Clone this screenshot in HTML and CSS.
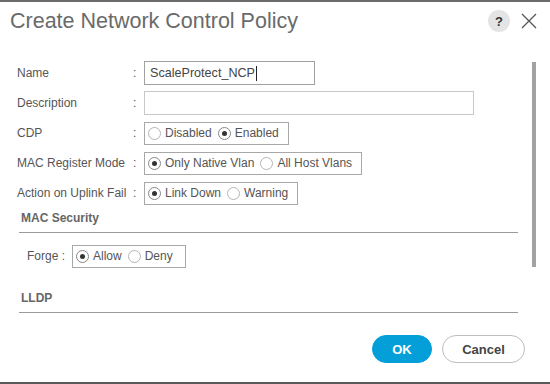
FILE: index.html
```html
<!DOCTYPE html>
<html lang="en">
<head>
    <meta charset="UTF-8">
    <title>Create Network Control Policy</title>
    <link rel="stylesheet" href="styles.css">
</head>
<body>
    <div class="dialog">
        <div class="dialog__header">
            <h1 class="dialog__title">Create Network Control Policy</h1>
            <span class="help">?</span>
            <svg class="close" width="16" height="16" viewBox="0 0 16 16">
                <path d="M1 1 L15 15 M15 1 L1 15" stroke="#555" stroke-width="1.3" fill="none"/>
            </svg>
        </div>

        <div class="dialog__body">
            <div class="row">
                <div class="label"><span class="label__text">Name</span><span class="colon">:</span></div>
                <div class="input input--focus">ScaleProtect_NCP<span class="caret"></span></div>
            </div>
            <div class="row">
                <div class="label"><span class="label__text">Description</span><span class="colon">:</span></div>
                <div class="input input--wide"></div>
            </div>
            <div class="row">
                <div class="label"><span class="label__text">CDP</span><span class="colon">:</span></div>
                <div class="radios">
                    <span class="radio"></span><span class="radio__text">Disabled</span>
                    <span class="radio radio--on"></span><span class="radio__text">Enabled</span>
                </div>
            </div>
            <div class="row">
                <div class="label"><span class="label__text">MAC Register Mode</span><span class="colon">:</span></div>
                <div class="radios">
                    <span class="radio radio--on"></span><span class="radio__text">Only Native Vlan</span>
                    <span class="radio"></span><span class="radio__text">All Host Vlans</span>
                </div>
            </div>
            <div class="row">
                <div class="label"><span class="label__text">Action on Uplink Fail</span><span class="colon">:</span></div>
                <div class="radios">
                    <span class="radio radio--on"></span><span class="radio__text">Link Down</span>
                    <span class="radio"></span><span class="radio__text">Warning</span>
                </div>
            </div>

            <div class="section section--mac">MAC Security</div>
            <div class="row row--sub">
                <div class="label label--short">Forge :</div>
                <div class="radios radios--forge">
                    <span class="radio radio--on"></span><span class="radio__text">Allow</span>
                    <span class="radio"></span><span class="radio__text">Deny</span>
                </div>
            </div>

            <div class="section section--lldp">LLDP</div>
        </div>

        <div class="dialog__footer">
            <button class="btn btn--primary">OK</button>
            <button class="btn">Cancel</button>
        </div>

        <div class="scrollbar"></div>
    </div>
</body>
</html>
```

FILE: styles.css
```css
body {
    margin: 0;
    background: #fff;
    font-family: "Liberation Sans", Arial, sans-serif;
    color: #555;
}

.dialog {
    position: relative;
    height: 384px;
    box-sizing: border-box;
    border-top: 2px solid #6b6b6b;
    border-bottom: 2px solid #5a5a5a;
    display: flex;
    flex-direction: column;
}

.dialog__header {
    height: 38px;
    display: flex;
    align-items: center;
    padding: 0 13px 0 10px;
}

.dialog__title {
    margin: 0;
    flex: 1;
    font-size: 21.5px;
    font-weight: normal;
    color: #6a6a6a;
}

.help {
    width: 22px;
    height: 22px;
    border-radius: 50%;
    background: #e4e4e4;
    color: #333;
    font-size: 13px;
    font-weight: bold;
    display: flex;
    align-items: center;
    justify-content: center;
    margin-right: 11px;
}

.dialog__body {
    padding: 21px 0 0 17px;
}

.row {
    display: flex;
    align-items: center;
    height: 24px;
    margin-bottom: 6px;
    font-size: 12px;
}

.label {
    width: 127px;
    display: flex;
    color: #555;
}

.label__text {
    min-width: 113px;
}

.colon {
    padding-left: 3px;
}

.input {
    box-sizing: border-box;
    width: 171px;
    height: 24px;
    border: 1px solid #c8c8c8;
    padding: 0 5px;
    display: flex;
    align-items: center;
    font-size: 12.6px;
    color: #444;
}

.input--focus {
    border-color: #a0a0a0;
}

.input--wide {
    width: 330px;
}

.caret {
    width: 1px;
    height: 15px;
    background: #222;
    margin-left: 1px;
}

.radios {
    box-sizing: border-box;
    height: 23px;
    display: inline-flex;
    align-items: center;
    border: 1px solid #a8a8a8;
    padding: 0 9px 0 3px;
    font-size: 12px;
    color: #555;
}

.radios--forge {
    padding-right: 12px;
}

.radio {
    box-sizing: border-box;
    width: 13px;
    height: 13px;
    border-radius: 50%;
    border: 1px solid #b5b5b5;
    margin-right: 4px;
    display: flex;
    align-items: center;
    justify-content: center;
}

.radio--on {
    border-color: #888;
}

.radio--on::after {
    content: "";
    width: 5px;
    height: 5px;
    border-radius: 50%;
    background: #333;
}

.radio__text {
    margin-right: 6px;
}

.radio__text:last-child {
    margin-right: 0;
}

.section {
    margin: 0 32px 0 2px;
    padding: 4px 0 6px 2px;
    border-bottom: 1px solid #9a9a9a;
    font-size: 12px;
    font-weight: bold;
    color: #666;
    line-height: 15px;
}

.section--mac {
    margin-top: -4px;
}

.section--lldp {
    margin-top: 19px;
}

.row--sub {
    margin-top: 11px;
    margin-bottom: 0;
}

.label--short {
    width: 45px;
    padding-left: 10px;
}

.dialog__footer {
    display: flex;
    justify-content: flex-end;
    gap: 10px;
    padding: 22px 25px 0 0;
}

.btn {
    height: 28px;
    width: 83px;
    border-radius: 14px;
    border: 1px solid #bdbdbd;
    background: #fff;
    color: #444;
    font-family: "Liberation Sans", Arial, sans-serif;
    font-size: 13px;
    font-weight: bold;
}

.btn--primary {
    width: 60px;
    border-color: #049fd9;
    background: #049fd9;
    color: #fff;
}

.scrollbar {
    position: absolute;
    left: 532px;
    top: 60px;
    width: 4px;
    height: 205px;
    background: #a2a2a2;
}
```
